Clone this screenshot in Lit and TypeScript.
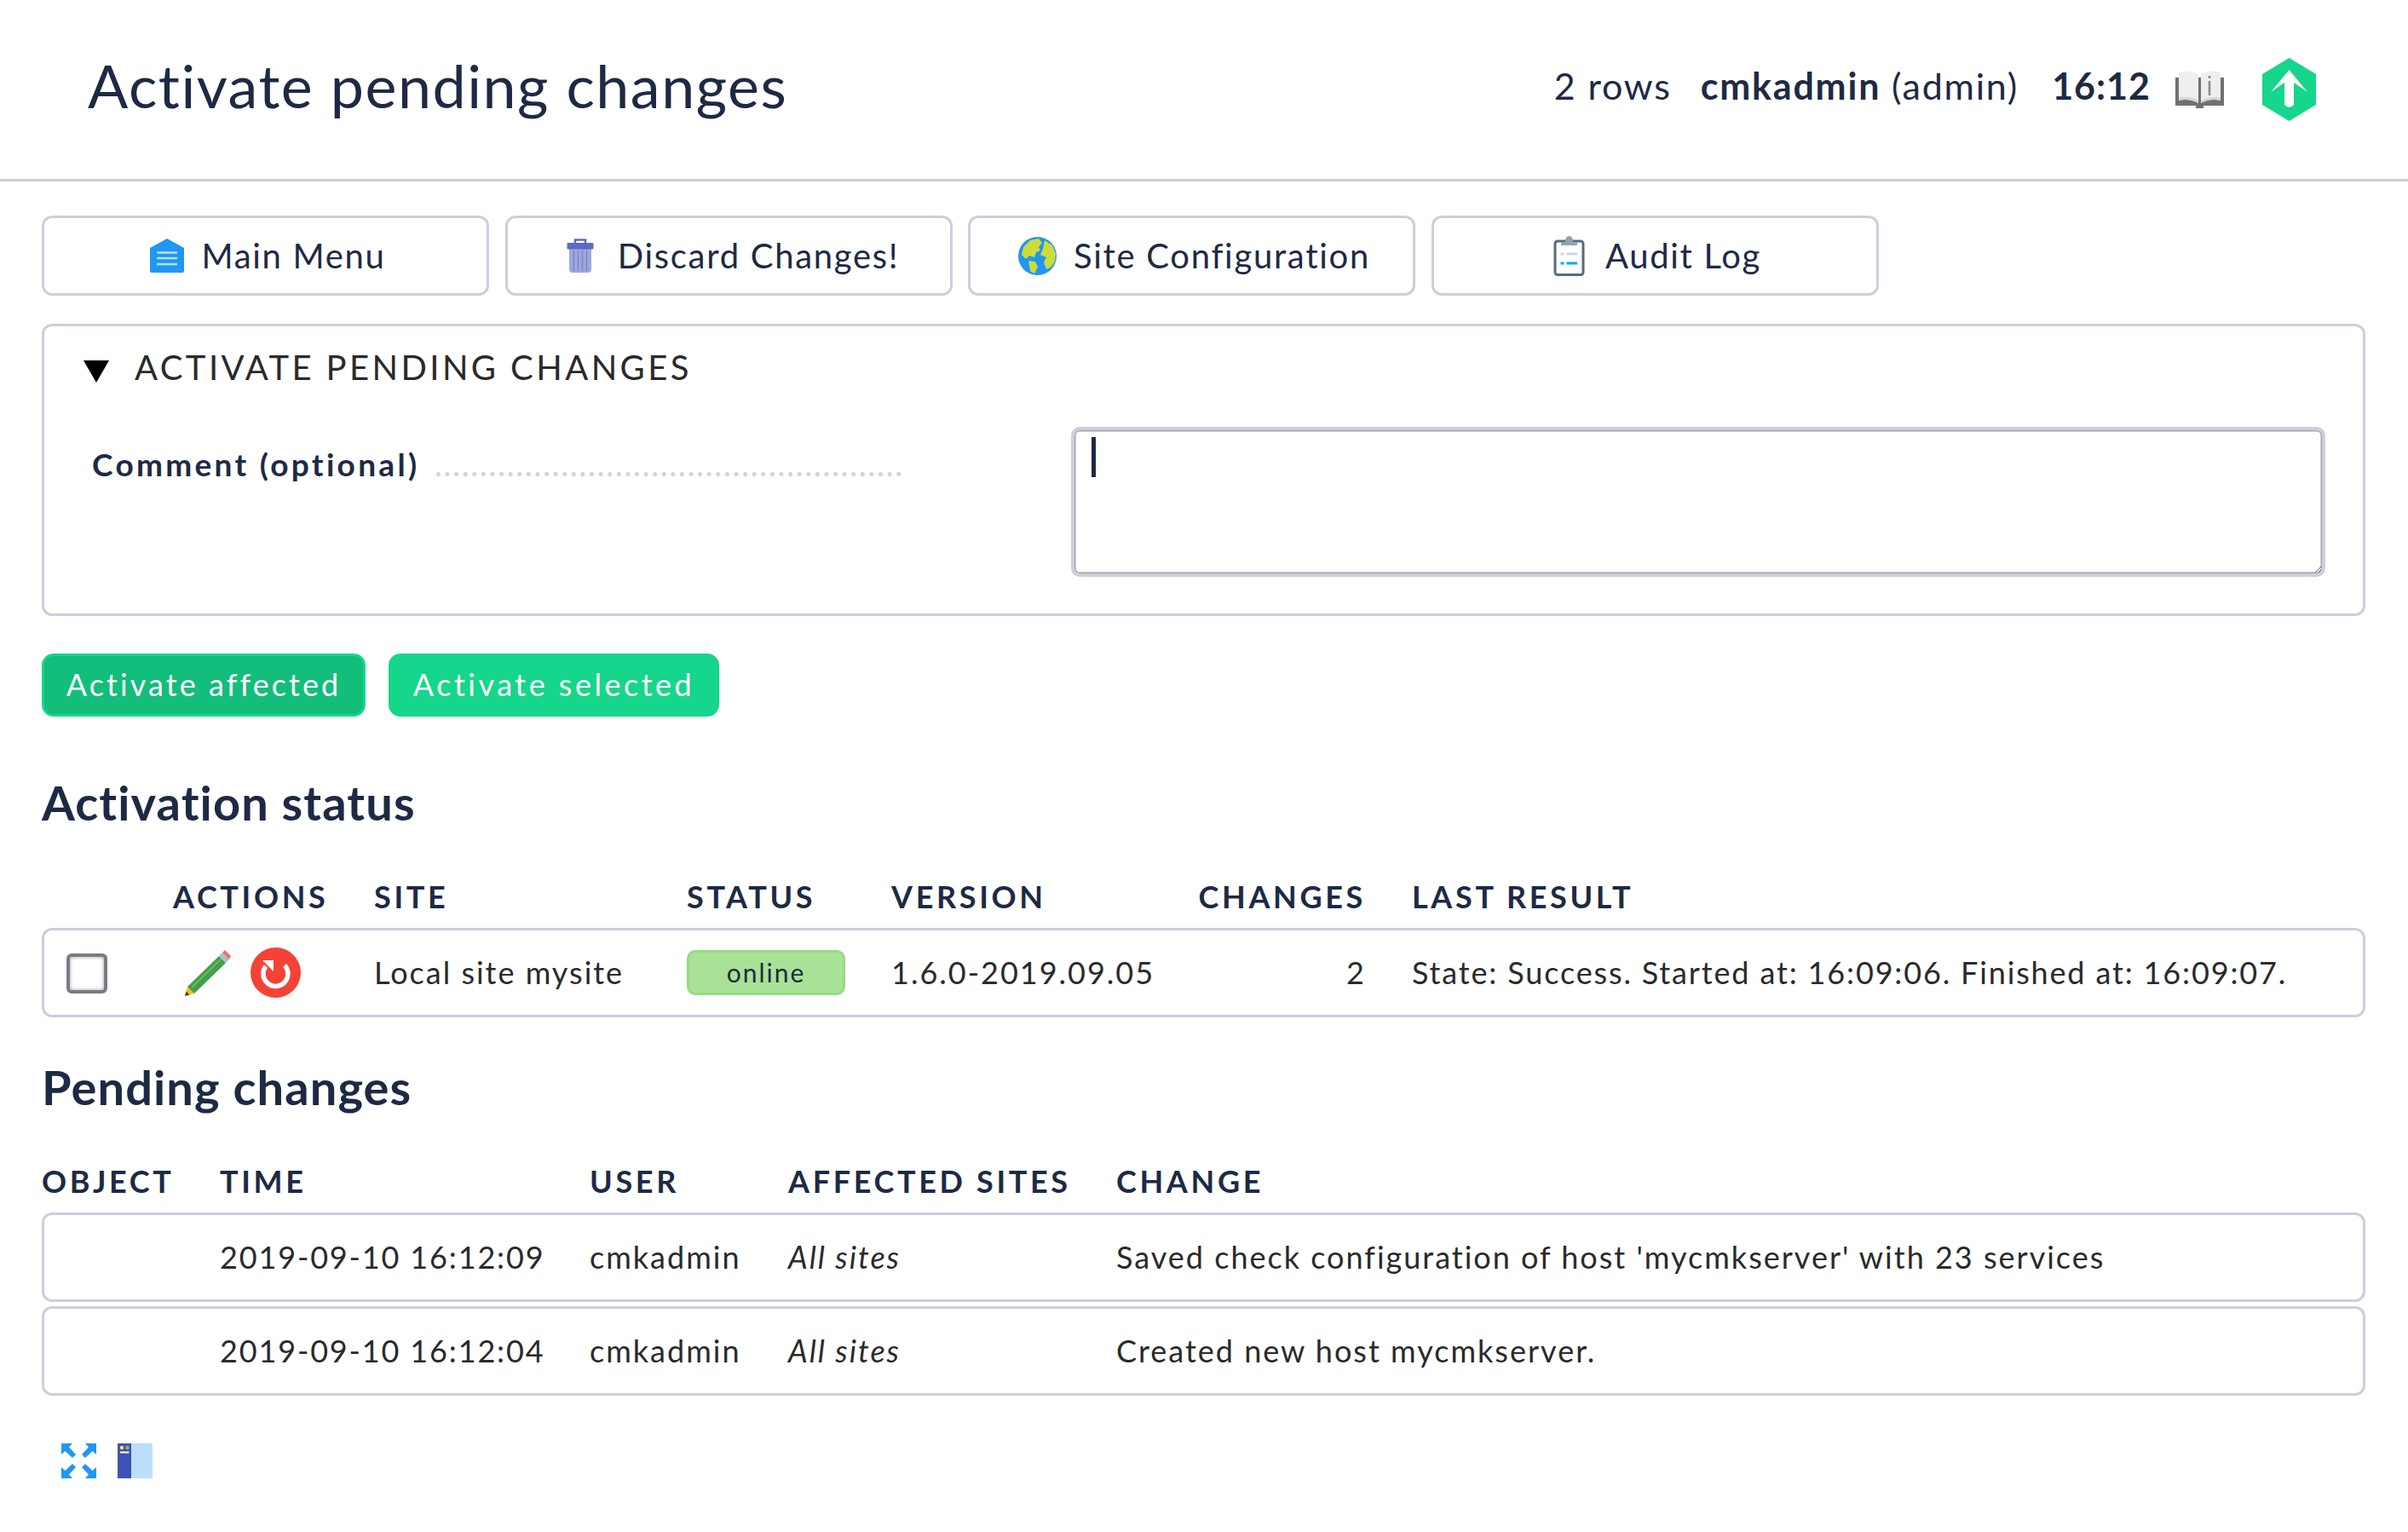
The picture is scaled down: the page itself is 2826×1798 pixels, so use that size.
import { LitElement, html, css } from 'lit';
import { customElement } from 'lit/decorators.js';

const menuIcon = html`<svg viewBox="0 0 40 40" width="40" height="40">
  <path d="M20 0 L40 11 V38 Q40 40 38 40 H2 Q0 40 0 38 V11 Z" fill="#2196f3" />
  <path d="M8 16.500 H32 M8 23 H32 M8 30 H32" stroke="#bbdefb" stroke-width="2.500" />
</svg>`;

const trashIcon = html`<svg viewBox="0 0 40 40" width="40" height="40">
  <path d="M7 11 H33 V36 Q33 40 29 40 H11 Q7 40 7 36 Z" fill="#9fa8da" />
  <path d="M12.500 14 V38 M17.500 14 V38 M22.500 14 V38 M27.500 14 V38" stroke="#7986cb" stroke-width="1.500" />
  <path d="M14 6 V1.500 H26 V6" fill="none" stroke="#5c6bc0" stroke-width="2.500" />
  <rect x="4.500" y="5" width="31" height="7.500" rx="1" fill="#5c6bc0" />
</svg>`;

const globeIcon = html`<svg viewBox="0 0 45 45" width="45" height="45">
  <circle cx="22.500" cy="22.500" r="22.500" fill="#2196f3" />
  <path d="M14 4 L24 2 L28 7 L24 12 L26 16 L21 18 L19 24 L13 22 L9 26 L4 21 L6 12 Z" fill="#cddc39" />
  <path d="M31 4 L40 10 L44 20 L43 29 L38 36 L33 38 L30 30 L33 24 L26 21 L29 14 Z" fill="#cddc39" />
  <path d="M12 28 L20 29 L23 35 L19 43 L14 40 Z" fill="#cddc39" />
</svg>`;

const auditIcon = html`<svg viewBox="0 0 37 48" width="37" height="48">
  <rect x="2" y="7" width="33" height="39.500" rx="3" fill="#fff" stroke="#546e7a" stroke-width="3" />
  <path d="M9 8 H14 Q14 1 18.500 1 Q23 1 23 8 H28 V12 H9 Z" fill="#90a4ae" />
  <path d="M8.500 22 H12.500 M15.500 22 H28" stroke="#cfd8dc" stroke-width="3" />
  <path d="M8.500 33 H12.500 M15.500 33 H28" stroke="#03a9f4" stroke-width="3" />
</svg>`;

const bookIcon = html`<svg viewBox="0 0 57 44" width="57" height="44">
  <path d="M0 8 H57 V41 H33 V44 H24 V41 H0 Z" fill="#707070" />
  <path d="M4 2 Q16 -2 27 4 V38 Q16 32 4 35 Z" fill="#eeeeee" />
  <path d="M30 4 Q41 -2 53 2 V35 Q41 32 30 38 Z" fill="#eeeeee" />
  <path d="M4 35 Q16 32 27 38 V35 Q16 29 4 32 Z M30 38 Q41 32 53 35 V32 Q41 29 30 35 Z" fill="#d4d4d4" />
  <path d="M40 6 V9 M40 12 V29" stroke="#8a8a8a" stroke-width="2.500" />
</svg>`;

const logoIcon = html`<svg viewBox="0 0 63 74" width="63" height="74">
  <path d="M31.500 0 L63 19 V55 L31.500 74 L0 55 V19 Z" fill="#15d68a" />
  <path d="M31.500 14 L53 40 L37 29 V55 Q31.500 61 26 55 V29 L10 40 Z" fill="#fff" />
</svg>`;

const pencilIcon = html`<svg viewBox="0 0 54 54" width="54" height="54">
  <path d="M0 54 L3 43 L11 51 Z" fill="#ffc107" />
  <path d="M0 54 L1.500 48.500 L5.500 52.500 Z" fill="#424242" />
  <path d="M3 43 L40 7 L48 15 L11 51 Z" fill="#43a047" />
  <path d="M8 44 L43 10" stroke="#66bb6a" stroke-width="2" />
  <path d="M40 7 L44 3 L52 11 L48 15 Z" fill="#b0bec5" />
  <path d="M44 3 L47 0 L54 7 L52 11 Z" fill="#e57373" />
</svg>`;

const restartIcon = html`<svg viewBox="0 0 59 59" width="59" height="59">
  <circle cx="29.500" cy="29.500" r="29.500" fill="#f44336" />
  <path d="M40 21 A14.500 14.500 0 1 1 18 22" fill="none" stroke="#fff" stroke-width="5.500" />
  <path d="M14 15 H27 V28 Z" fill="#fff" />
</svg>`;

const expandIcon = html`<svg viewBox="0 0 41 41" width="41" height="41">
  <g fill="#2196f3">
    <path d="M0 0 H13 L9 4.500 L17 13 L13 17 L4.500 9 L0 13 Z" />
    <path d="M41 0 H28 L32 4.500 L24 13 L28 17 L36.500 9 L41 13 Z" />
    <path d="M0 41 H13 L9 36.500 L17 28 L13 24 L4.500 32 L0 28 Z" />
    <path d="M41 41 H28 L32 36.500 L24 28 L28 24 L36.500 32 L41 28 Z" />
  </g>
</svg>`;

const sidebarIcon = html`<svg viewBox="0 0 41 41" width="41" height="41">
  <rect x="0" y="0" width="41" height="41" rx="1" fill="#bbdefb" />
  <rect x="0" y="0" width="16" height="41" fill="#3f51b5" />
  <circle cx="5" cy="5" r="2.200" fill="#ffeb3b" />
  <circle cx="11.500" cy="5" r="2.200" fill="#8bc34a" />
  <rect x="3" y="9.500" width="10.500" height="2" fill="#fff" />
</svg>`;

const siteRows = [
  { site: 'Local site mysite', status: 'online', version: '1.6.0-2019.09.05', changes: '2',
    result: 'State: Success. Started at: 16:09:06. Finished at: 16:09:07.' },
];

const pendingRows = [
  { time: '2019-09-10 16:12:09', user: 'cmkadmin', sites: 'All sites',
    change: "Saved check configuration of host 'mycmkserver' with 23 services" },
  { time: '2019-09-10 16:12:04', user: 'cmkadmin', sites: 'All sites',
    change: 'Created new host mycmkserver.' },
];

@customElement('app-root')
export class AppRoot extends LitElement {
  static styles = css`
    :host {
      display: block;
      background: #fff;
      color: #1e2a44;
      font-family: Lato, "Liberation Sans", sans-serif;
      min-height: 1798px;
    }
    svg {
      display: block;
      flex: none;
    }
    .top {
      display: flex;
      align-items: center;
      box-sizing: border-box;
      height: 213px;
      padding: 0 108px 0 103px;
      border-bottom: 3px solid #cbcfdd;
    }
    .top h1 {
      flex: 1;
      margin: 0 0 11px;
      font-size: 70px;
      font-weight: 400;
      letter-spacing: 1.500px;
    }
    .rows, .user, .time {
      margin-bottom: 9px;
      font-size: 43px;
      letter-spacing: 1.800px;
    }
    .rows { margin-right: 34px; }
    .user { margin-right: 39px; }
    .user b, .time { font-weight: 700; }
    .time { margin-right: 29px; letter-spacing: 1px; }
    .top .book { margin-right: 45px; }
    main {
      padding: 40px 50px 0 49px;
    }
    .menu {
      display: flex;
      gap: 18.500px;
    }
    .menu-btn {
      display: flex;
      align-items: center;
      justify-content: center;
      gap: 24px;
      box-sizing: border-box;
      width: 525px;
      height: 94px;
      padding-left: 6px;
      border: 3px solid #cbcfdd;
      border-radius: 12px;
      font-size: 40px;
      letter-spacing: 1.700px;
    }
    .menu-btn.tight { gap: 20px; }
    .panel {
      box-sizing: border-box;
      height: 343px;
      margin-top: 33px;
      padding: 24px 44px 0 46px;
      border: 3px solid #cbcfdd;
      border-radius: 12px;
      color: #2a2a2a;
    }
    .panel-head {
      display: flex;
      align-items: center;
      gap: 30px;
      font-size: 40px;
      font-weight: 400;
      letter-spacing: 3.400px;
    }
    .tri {
      width: 30px;
      height: 26px;
      margin-top: 10px;
      background: #000;
      clip-path: polygon(0 0, 100% 0, 50% 100%);
    }
    .form {
      display: flex;
      margin-top: 46px;
    }
    .label {
      display: flex;
      align-items: baseline;
      flex: 1;
      padding: 21px 0 0 10px;
      color: #1e2a44;
      font-size: 37px;
      font-weight: 700;
      letter-spacing: 3.300px;
    }
    .dots {
      width: 550px;
      height: 5px;
      margin-left: 20px;
      background: radial-gradient(circle at 2.500px 2.500px, #d4d4d4 2.400px, transparent 2.600px) 0 0 / 10.600px 5px repeat-x;
    }
    .editor {
      position: relative;
      flex: none;
      width: 1472px;
      height: 176px;
    }
    textarea {
      display: block;
      box-sizing: border-box;
      width: 100%;
      height: 100%;
      margin: 0;
      border: 4px solid #cbcfdd;
      border-radius: 10px;
      box-shadow: inset 0 0 0 1.500px #a3a3a3;
      outline: none;
      background: #fff;
    }
    .caret {
      position: absolute;
      left: 24px;
      top: 12px;
      width: 5px;
      height: 47px;
      background: #1e2a44;
    }
    .actions {
      display: flex;
      gap: 27px;
      margin-top: 44px;
    }
    .act {
      box-sizing: border-box;
      width: 380px;
      height: 74px;
      padding: 0 0 2px;
      border: 3px solid #15d68a;
      border-radius: 14px;
      background: #15d68a;
      color: #fff;
      font: inherit;
      font-size: 36px;
      letter-spacing: 3.100px;
    }
    .act.dark { background: #13bd7a; }
    .act.wide { width: 388px; letter-spacing: 3.500px; }
    h2 {
      margin: 0;
      font-size: 56px;
      font-weight: 700;
      line-height: 70px;
      letter-spacing: 1.100px;
    }
    h2.first { margin-top: 66px; }
    h2.second { margin-top: 47px; }
    .grid {
      display: grid;
      align-items: center;
      font-size: 36px;
      letter-spacing: 2px;
      white-space: nowrap;
    }
    .sites { grid-template-columns: 154px 236px 367px 240px 300px 257px 1fr; }
    .pending { grid-template-columns: 209px 434px 233px 385px 1fr; }
    .grid.head {
      height: 36px;
      margin-top: 53px;
      margin-bottom: 23px;
      font-weight: 700;
      letter-spacing: 3.650px;
    }
    .grid.row {
      box-sizing: border-box;
      height: 105px;
      padding-bottom: 2px;
      border-radius: 12px;
      box-shadow: inset 0 0 0 3px #cbcfdd;
      color: #2a2a2a;
    }
    .grid.row + .grid.row { margin-top: 5px; }
    .right { text-align: right; }
    .last { padding-left: 54px; }
    .num { letter-spacing: 1.850px; }
    .check {
      box-sizing: border-box;
      width: 48px;
      height: 47px;
      margin: 3px 0 0 29px;
      border: 4px solid #777c85;
      border-radius: 6px;
      box-shadow: inset 0 0 4px #999;
    }
    .icons {
      display: flex;
      align-items: center;
      gap: 23px;
      margin: 2px 0 0 14px;
    }
    .pill {
      box-sizing: border-box;
      width: 186px;
      height: 53px;
      margin-top: 2px;
      line-height: 46px;
      border: 3px solid #95dc80;
      border-radius: 10px;
      background: #a8e297;
      color: #1e2a44;
      font-size: 30px;
      text-align: center;
    }
    i { font-style: italic; }
    .foot {
      display: flex;
      gap: 25px;
      margin: 56px 0 0 23px;
    }
  `;

  render() {
    return html`
      <header class="top">
        <h1>Activate pending changes</h1>
        <span class="rows">2 rows</span>
        <span class="user"><b>cmkadmin</b> (admin)</span>
        <span class="time">16:12</span>
        <span class="book">${bookIcon}</span>
        ${logoIcon}
      </header>
      <main>
        <nav class="menu">
          <div class="menu-btn tight">${menuIcon}<span>Main Menu</span></div>
          <div class="menu-btn">${trashIcon}<span>Discard Changes!</span></div>
          <div class="menu-btn tight">${globeIcon}<span>Site Configuration</span></div>
          <div class="menu-btn">${auditIcon}<span>Audit Log</span></div>
        </nav>
        <section class="panel">
          <div class="panel-head"><span class="tri"></span><span>ACTIVATE PENDING CHANGES</span></div>
          <div class="form">
            <div class="label"><span>Comment (optional)</span><span class="dots"></span></div>
            <div class="editor">
              <textarea></textarea>
              <span class="caret"></span>
            </div>
          </div>
        </section>
        <div class="actions">
          <button class="act dark">Activate affected</button>
          <button class="act wide">Activate selected</button>
        </div>
        <h2 class="first">Activation status</h2>
        <div class="grid sites head">
          <span></span><span>ACTIONS</span><span>SITE</span><span>STATUS</span><span>VERSION</span>
          <span class="right">CHANGES</span><span class="last">LAST RESULT</span>
        </div>
        ${siteRows.map(
          (r) => html`<div class="grid sites row">
            <span class="check"></span>
            <span class="icons">${pencilIcon}${restartIcon}</span>
            <span>${r.site}</span>
            <span><div class="pill">${r.status}</div></span>
            <span>${r.version}</span>
            <span class="right">${r.changes}</span>
            <span class="last num">${r.result}</span>
          </div>`,
        )}
        <h2 class="second">Pending changes</h2>
        <div class="grid pending head">
          <span>OBJECT</span><span>TIME</span><span>USER</span><span>AFFECTED SITES</span><span>CHANGE</span>
        </div>
        ${pendingRows.map(
          (r) => html`<div class="grid pending row">
            <span></span>
            <span class="num">${r.time}</span>
            <span>${r.user}</span>
            <i>${r.sites}</i>
            <span>${r.change}</span>
          </div>`,
        )}
        <div class="foot">${expandIcon}${sidebarIcon}</div>
      </main>
    `;
  }
}
